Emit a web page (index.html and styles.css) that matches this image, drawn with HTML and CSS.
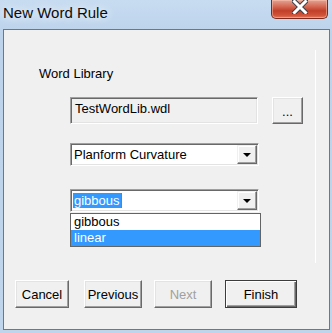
FILE: index.html
```html
<!DOCTYPE html>
<html>
<head>
<meta charset="utf-8">
<link rel="stylesheet" href="styles.css">
</head>
<body>
<div class="window">
  <div class="titlebar">
    <span class="title">New Word Rule</span>
    <div class="close">
      <svg width="16" height="14" viewBox="0 0 16 14">
        <path d="M2 1 L14 13 M14 1 L2 13" stroke="#3a3f48" stroke-width="5" stroke-linecap="square" fill="none"/>
        <path d="M2.5 1.5 L13.5 12.5 M13.5 1.5 L2.5 12.5" stroke="#ffffff" stroke-width="3" stroke-linecap="square" fill="none"/>
      </svg>
    </div>
  </div>
  <div class="client">
    <div class="panel">
      <div class="label">Word Library</div>
      <div class="row">
        <div class="textbox">TestWordLib.wdl</div>
        <div class="btn browse">...</div>
      </div>
      <div class="combo c1">
        <span class="value">Planform Curvature</span>
        <span class="arrowbtn"><span class="tri"></span></span>
      </div>
      <div class="combo c2">
        <span class="value"><span class="sel">gibbous</span></span>
        <span class="arrowbtn"><span class="tri"></span></span>
        <ul class="list">
          <li>gibbous</li>
          <li class="hl">linear</li>
        </ul>
      </div>
    </div>
    <div class="buttons">
      <div class="btn cancel">Cancel</div>
      <div class="btn previous">Previous</div>
      <div class="btn next disabled">Next</div>
      <div class="btn finish default">Finish</div>
    </div>
  </div>
</div>
</body>
</html>
```
FILE: styles.css
```css
* { box-sizing: border-box; }
html, body { margin: 0; padding: 0; }
body { width: 332px; height: 333px; overflow: hidden; font-family: "Liberation Sans", Arial, sans-serif; }

.window {
  width: 332px;
  height: 333px;
  padding: 0 2px 3px 3px;
  display: flex;
  flex-direction: column;
  background: linear-gradient(180deg, #c8dcf1 0%, #bcd3eb 10%, #bfd5ec 100%);
}

.titlebar {
  height: 29px;
  display: flex;
  align-items: flex-start;
  margin-left: -3px;
  margin-right: -2px;
}
.title {
  padding: 4px 0 0 3px;
  font-size: 15px;
  line-height: 17px;
  color: #0c0c0c;
  text-shadow: 0 0 6px #e8f1fb, 0 0 10px #e8f1fb;
}
.close {
  margin-left: auto;
  margin-right: 4px;
  width: 57px;
  height: 19px;
  border: 1px solid #7c2a1e;
  border-top: none;
  border-radius: 0 0 5px 5px;
  background: linear-gradient(180deg, #e3a497 0%, #d56a55 35%, #c13f28 60%, #d0533a 85%, #e07a5c 100%);
  box-shadow: inset 0 0 0 1px rgba(255, 200, 180, 0.5);
  display: flex;
  justify-content: center;
  align-items: flex-start;
  padding-top: 0;
}
.close svg { display: block; margin-top: 0; }

.client {
  width: 327px;
  height: 301px;
  border: 1px solid #6b7886;
  background: #f0f0f0;
  display: flex;
  flex-direction: column;
}

.panel {
  margin-top: 20px;
  width: 312px;
  height: 213px;
  border-right: 1px solid #ffffff;
  padding: 16px 0 0 66px;
  display: flex;
  flex-direction: column;
  align-items: flex-start;
}
.label {
  margin-left: -31px;
  font-size: 13px;
  line-height: 15px;
  color: #000;
}
.row {
  margin-top: 16px;
  display: flex;
  gap: 14px;
}
.textbox {
  width: 188px;
  height: 27px;
  background: #f0f0f0;
  border-top: 1px solid #a0a0a0;
  border-left: 1px solid #a0a0a0;
  border-bottom: 1px solid #ffffff;
  border-right: 1px solid #ffffff;
  box-shadow: inset 1px 1px 0 #696969, inset -1px -1px 0 #e3e3e3;
  padding: 3px 0 0 4px;
  font-size: 13px;
  line-height: 15px;
  color: #000;
}

.btn {
  display: flex;
  align-items: center;
  justify-content: center;
  background: #f0f0f0;
  border-top: 1px solid #ffffff;
  border-left: 1px solid #ffffff;
  border-bottom: 1px solid #696969;
  border-right: 1px solid #696969;
  box-shadow: inset -1px -1px 0 #a0a0a0, inset 1px 1px 0 #e3e3e3;
  font-size: 13px;
  line-height: 15px;
  color: #000;
}
.browse {
  width: 31px;
  height: 27px;
  padding-top: 2px;
}

.combo {
  width: 189px;
  height: 23px;
  background: #ffffff;
  border-top: 1px solid #a0a0a0;
  border-left: 1px solid #a0a0a0;
  border-bottom: 1px solid #ffffff;
  border-right: 1px solid #ffffff;
  box-shadow: inset 1px 1px 0 #696969, inset -1px -1px 0 #e3e3e3;
  padding: 1px;
  display: flex;
  font-size: 13px;
  line-height: 15px;
  color: #000;
}
.c1 { margin-top: 19px; }
.c2 { margin-top: 23px; position: relative; }
.value {
  flex: 1;
  padding: 2px 0 0 2px;
}
.c2 .value { padding-left: 1px; }
.sel {
  display: inline-block;
  background: #3399ff;
  color: #ffffff;
  padding: 0 1px 0 1px;
  border-right: 1px solid #c86a1e;
}
.arrowbtn {
  width: 20px;
  height: 19px;
  background: #f0f0f0;
  border-top: 1px solid #f0f0f0;
  border-left: 1px solid #f0f0f0;
  border-bottom: 1px solid #696969;
  border-right: 1px solid #696969;
  box-shadow: inset -1px -1px 0 #a0a0a0, inset 1px 1px 0 #ffffff;
  display: flex;
  align-items: center;
  justify-content: center;
}
.tri {
  width: 0;
  height: 0;
  border-left: 4px solid transparent;
  border-right: 4px solid transparent;
  border-top: 4px solid #000;
  margin-top: 1px;
}

.list {
  position: absolute;
  left: -1px;
  top: 23px;
  width: 191px;
  height: 34px;
  margin: 0;
  padding: 0;
  list-style: none;
  background: #ffffff;
  border: 1px solid #646464;
}
.list li {
  height: 16px;
  line-height: 16px;
  padding-left: 3px;
  font-size: 13px;
  color: #000;
}
.list li.hl {
  background: #3399ff;
  color: #ffffff;
}

.buttons {
  margin-top: 17px;
  padding-left: 11px;
  display: flex;
}
.buttons .btn { height: 28px; }
.cancel { width: 54px; }
.previous { width: 58px; margin-left: 15px; }
.next { width: 58px; margin-left: 12px; }
.finish { width: 72px; margin-left: 13px; }
.disabled { color: #a0a0a0; }
.default {
  border: 1px solid #3c3c3c;
  box-shadow: inset 1px 1px 0 #ffffff, inset -1px -1px 0 #696969, inset -2px -2px 0 #a0a0a0;
}
```
